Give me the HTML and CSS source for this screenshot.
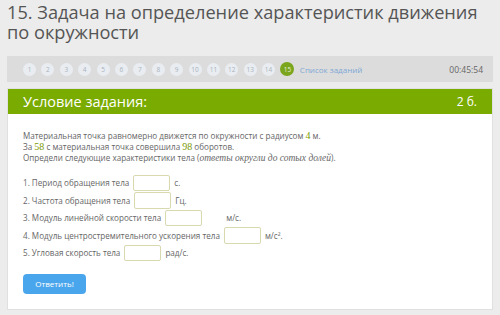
FILE: index.html
```html
<!DOCTYPE html>
<html lang="ru">
<head>
    <meta charset="UTF-8">
    <title>Задача 15</title>
    <link rel="stylesheet" href="styles.css">
</head>
<body>
    <h1 class="task-title">15. Задача на определение характеристик движения по окружности</h1>

    <div class="nav-bar">
        <div class="pages">
            <span class="page">1</span>
            <span class="page">2</span>
            <span class="page">3</span>
            <span class="page">4</span>
            <span class="page">5</span>
            <span class="page">6</span>
            <span class="page">7</span>
            <span class="page">8</span>
            <span class="page">9</span>
            <span class="page">10</span>
            <span class="page">11</span>
            <span class="page">12</span>
            <span class="page">13</span>
            <span class="page">14</span>
            <span class="page page-current">15</span>
            <a class="task-list" href="#">Список заданий</a>
        </div>
        <div class="timer">00:45:54</div>
    </div>

    <div class="task-card">
        <div class="card-header">
            <span>Условие задания:</span>
            <span class="points">2 б.</span>
        </div>
        <div class="card-body">
            <p class="condition">
                Материальная точка равномерно движется по окружности с радиусом <span class="num">4</span> м.<br>
                За <span class="num">58</span> с материальная точка совершила <span class="num">98</span> оборотов.<br>
                Определи следующие характеристики тела (<i>ответы округли до сотых долей</i>).
            </p>

            <div class="answers">
                <div class="answer-row">1. Период обращения тела <input class="answer-input" type="text"> <span class="unit">с.</span></div>
                <div class="answer-row">2. Частота обращения тела <input class="answer-input" type="text"> <span class="unit">Гц.</span></div>
                <div class="answer-row">3. Модуль линейной скорости тела <input class="answer-input" type="text"> <span class="unit unit-far">м/с.</span></div>
                <div class="answer-row">4. Модуль центростремительного ускорения тела <input class="answer-input" type="text"> <span class="unit">м/с².</span></div>
                <div class="answer-row">5. Угловая скорость тела <input class="answer-input" type="text"> <span class="unit">рад/с.</span></div>
            </div>

            <button class="submit-btn">Ответить!</button>
        </div>
    </div>
</body>
</html>
```

FILE: styles.css
```css
* {
    margin: 0;
    padding: 0;
    box-sizing: border-box;
    font-family: 'Open Sans', sans-serif;
}

body {
    background-color: #ececec;
    padding: 0 7px;
    width: 500px;
    height: 315px;
    overflow: hidden;
}

.task-title {
    font-size: 18.2px;
    font-weight: 400;
    line-height: 20px;
    color: #555;
    padding-top: 2px;
    height: 56px;
}

.nav-bar {
    background-color: #dcdcdc;
    height: 26px;
    display: flex;
    align-items: center;
    justify-content: space-between;
    padding: 0 10px 0 16px;
}

.pages {
    display: flex;
    align-items: center;
    gap: 5.4px;
}

.page {
    width: 13px;
    height: 13px;
    border-radius: 50%;
    background-color: #e9edf1;
    color: #a9b3bd;
    font-size: 6.5px;
    display: flex;
    justify-content: center;
    align-items: center;
}

.page-current {
    width: 14px;
    height: 14px;
    background-color: #7aa51c;
    color: #e8f0d8;
}

.task-list {
    color: #7fa8d6;
    font-size: 8px;
    text-decoration: none;
}

.timer {
    color: #666;
    font-size: 8.5px;
}

.task-card {
    margin-top: 6px;
    background: white;
    border: 1px solid #e0e0e0;
}

.card-header {
    background-color: #7aab00;
    color: white;
    height: 25px;
    display: flex;
    align-items: center;
    justify-content: space-between;
    padding: 0 15px;
    font-size: 14.5px;
}

.points {
    font-size: 12px;
}

.card-body {
    padding: 16px 15px 15px;
    color: #666;
    font-size: 8.1px;
}

.condition {
    line-height: 11px;
}

.num {
    color: #7a9a00;
    font-family: 'Liberation Serif', serif;
    font-size: 10px;
}

.condition i {
    font-family: 'Liberation Serif', serif;
    font-size: 9.5px;
}

.answers {
    margin-top: 10px;
}

.answer-row {
    display: flex;
    align-items: center;
    height: 17.5px;
}

.answer-input {
    width: 37px;
    height: 16.5px;
    border: 1px solid #d9d9b0;
    border-radius: 2px;
    margin: 0 4px;
    background: white;
}

.unit-far {
    margin-left: 20px;
}

.submit-btn {
    margin-top: 12px;
    width: 63px;
    height: 20px;
    background-color: #4aa6ec;
    color: white;
    border: none;
    border-radius: 4px;
    font-size: 8px;
}
```
